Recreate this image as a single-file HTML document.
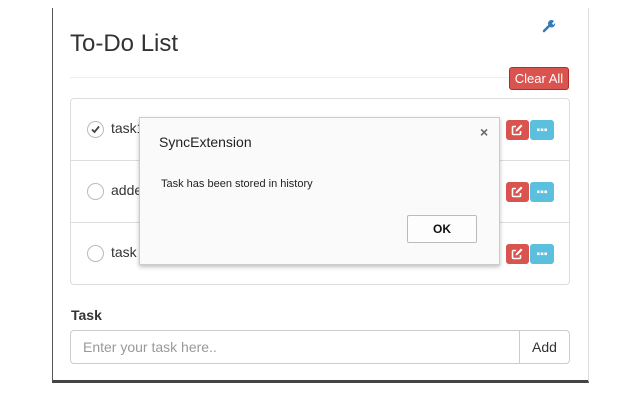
<!DOCTYPE html>
<html><head><style>
body{margin:0;width:640px;height:400px;background:#fff;position:relative;overflow:hidden;font-family:"Liberation Sans",sans-serif;color:#333}
.a{position:absolute}
.win{left:52px;top:8px;width:535px;height:372px;border-left:1px solid #555;border-right:1px solid #ddd;border-bottom:3px solid #444;}
.row{left:71px;width:498px;height:61px;border-bottom:1px solid #ddd}
.cb{width:15px;height:15px;border:1px solid #bbb;border-radius:50%;left:16px;top:22px;background:#fff}
.txt{left:40px;top:21px;font-size:14px}
.be{width:23px;height:20px;background:#d9534f;border-radius:3px;left:435px;top:21px}
.bd{width:24px;height:20px;background:#5bc0de;border-radius:3px;left:459px;top:21px}
</style></head><body>
<div class="a win"></div>
<div class="a" style="left:70px;top:30px;font-size:24px;color:#333">To-Do List</div>
<svg class="a" style="left:542px;top:19px" width="14" height="14" viewBox="0 0 14 14"><path d="M2 12 L8 6" stroke="#337ab7" stroke-width="2.5" stroke-linecap="round"/><path d="M7 7 A3.5 3.5 0 0 1 12 2 L10 4.5 L11.5 6 L13 4 A3.5 3.5 0 0 1 8 8Z" fill="#337ab7"/></svg>
<div class="a" style="left:70px;top:77px;width:440px;height:1px;background:#eee"></div>
<div class="a" style="left:509px;top:67px;width:60px;height:23px;background:#d9534f;border:1px solid #b52b27;border-radius:3px;box-sizing:border-box;color:#fff;font-size:13px;text-align:center;line-height:21px">Clear All</div>
<div class="a" style="left:70px;top:98px;width:498px;height:185px;border:1px solid #ddd;border-radius:4px"></div>
<svg width="0" height="0" style="position:absolute"><defs>
<g id="ed"><path d="M10 6.5 H7.5 A1 1 0 0 0 6.5 7.5 V13.5 A1 1 0 0 0 7.5 14.5 H13.5 A1 1 0 0 0 14.5 13.5 V11" fill="none" stroke="#fff" stroke-width="1.6"/><path d="M9.5 11.5 L10 9.5 L15 4.5 L16.5 6 L11.5 11Z" fill="#fff"/></g>
<g id="dt" fill="#fff"><rect x="7" y="8.5" width="2.6" height="2.6"/><rect x="10.7" y="8.5" width="2.6" height="2.6"/><rect x="14.4" y="8.5" width="2.6" height="2.6"/></g>
</defs></svg>
<div class="a row" style="top:99px"><div class="a cb"><svg width="15" height="15" viewBox="0 0 15 15"><path d="M4 7.5 L6.5 10 L11 4.5" fill="none" stroke="#444" stroke-width="1.8"/></svg></div><div class="a txt">task1</div><div class="a be"><svg width="23" height="20"><use href="#ed"/></svg></div><div class="a bd"><svg width="24" height="20"><use href="#dt"/></svg></div></div>
<div class="a row" style="top:161px"><div class="a cb"></div><div class="a txt">added</div><div class="a be"><svg width="23" height="20"><use href="#ed"/></svg></div><div class="a bd"><svg width="24" height="20"><use href="#dt"/></svg></div></div>
<div class="a row" style="top:223px;border:0"><div class="a cb"></div><div class="a txt">task</div><div class="a be"><svg width="23" height="20"><use href="#ed"/></svg></div><div class="a bd"><svg width="24" height="20"><use href="#dt"/></svg></div></div>
<div class="a" style="left:71px;top:307px;font-size:14px;font-weight:bold">Task</div>
<div class="a" style="left:70px;top:330px;width:500px;height:34px;border:1px solid #ccc;border-radius:4px;box-sizing:border-box"></div>
<div class="a" style="left:519px;top:330px;width:1px;height:34px;background:#ccc"></div>
<div class="a" style="left:83px;top:339px;font-size:14px;color:#999">Enter your task here..</div>
<div class="a" style="left:532px;top:339px;font-size:14px">Add</div>
<div class="a" style="left:139px;top:117px;width:361px;height:148px;background:#fafafa;border:1px solid #ccc;box-sizing:border-box;box-shadow:0 2px 4px rgba(0,0,0,.25)">
<div class="a" style="left:19px;top:16px;font-size:14px;color:#222">SyncExtension</div>
<div class="a" style="left:340px;top:6px;font-size:14px;color:#666;font-weight:bold">×</div>
<div class="a" style="left:21px;top:60px;font-size:11px;color:#222">Task has been stored in history</div>
<div class="a" style="left:267px;top:97px;width:70px;height:28px;border:1px solid #bbb;border-radius:2px;background:#fdfdfd;font-size:12px;font-weight:bold;text-align:center;line-height:27px;box-sizing:border-box;color:#111">OK</div>
</div>
</body></html>
